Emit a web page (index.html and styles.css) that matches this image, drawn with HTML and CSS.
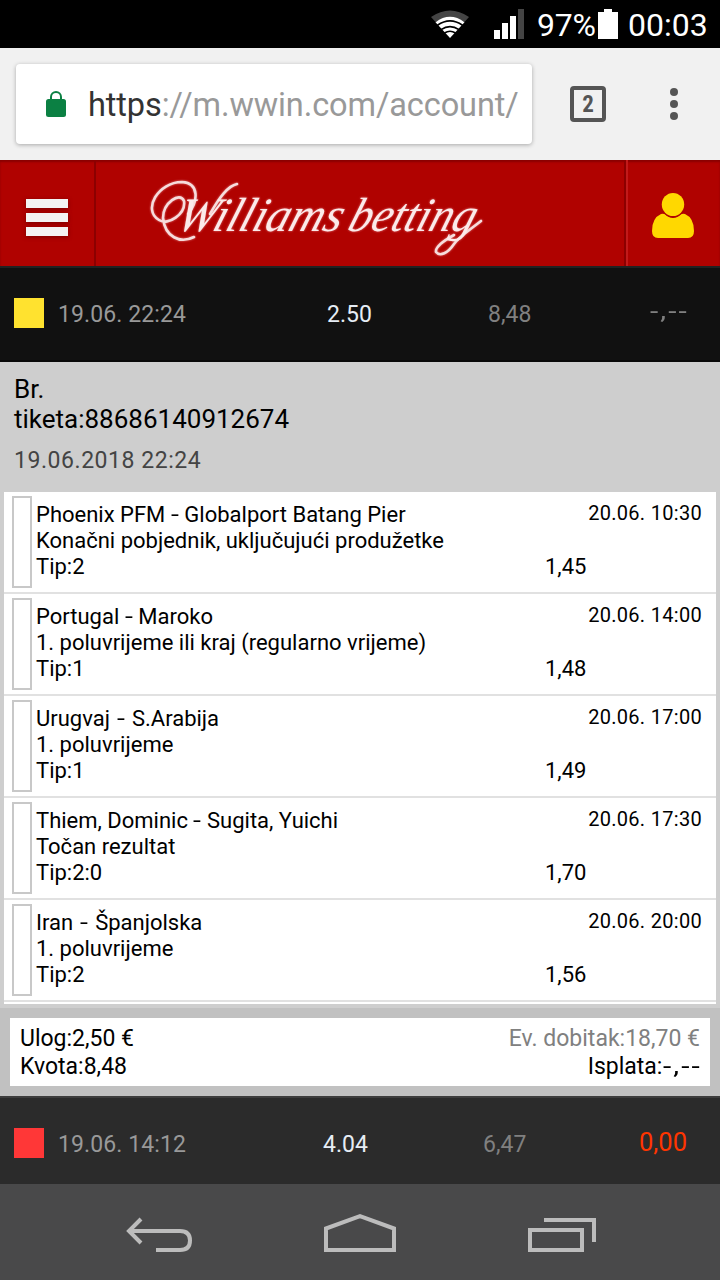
FILE: index.html
```html
<!DOCTYPE html>
<html lang="bs">
<head>
    <title>Williams betting</title>
    <meta charset="utf-8">
    <meta name="viewport" content="width=device-width, initial-scale=1">
    <link rel="stylesheet" href="styles.css">
</head>
<body>
<div class="status-bar">
    <svg class="wifi" width="38" height="29" viewBox="0 0 38 29">
        <path d="M0 7 Q19 -6 38 7 L33.500 12 Q19 2.500 4.500 12 Z" fill="#444"/>
        <path d="M4.500 12.200 Q19 1.500 33.500 12.200 L19 28 Z" fill="#fff"/>
        <path d="M6.500 15.200 Q19 6.500 31.500 15.200 M10 19.600 Q19 13.500 28 19.600 M13.500 23 Q19 19.500 24.500 23" fill="none" stroke="#000" stroke-width="1.700"/>
    </svg>
    <svg class="signal" width="30" height="30" viewBox="0 0 30 30">
        <path d="M0 21h6v9H0zM8 14h6v16H8zM16 7h6v23h-6z" fill="#fff"/>
        <path d="M24 0h6v30h-6z" fill="#444"/>
    </svg>
    <span class="percent">97%</span>
    <svg class="battery" width="20" height="30" viewBox="0 0 20 30">
        <path d="M6 0h8v3h6v27H0V3h6z" fill="#fff"/>
    </svg>
    <span class="clock">00:03</span>
</div>

<div class="browser-bar">
    <div class="url-box">
        <svg width="20" height="26" viewBox="0 0 20 26">
            <path d="M5 9V6a5 5 0 0 1 10 0v3" fill="none" stroke="#0b8043" stroke-width="2"/>
            <rect y="8" width="20" height="18" rx="2.500" fill="#0b8043"/>
        </svg>
        <div class="url"><span class="scheme">https</span>://m.wwin.com/account/</div>
    </div>
    <div class="tabs">2</div>
    <svg class="dots" width="8" height="32" viewBox="0 0 8 32">
        <g fill="#555"><circle cx="4" cy="4" r="4"/><circle cx="4" cy="16" r="4"/><circle cx="4" cy="28" r="4"/></g>
    </svg>
</div>

<div class="header">
    <div class="menu-button">
        <span></span><span></span><span></span>
    </div>
    <div class="logo">
        <svg width="350" height="100" viewBox="0 0 350 100">
            <!-- flourishes around the W and under the g -->
            <path d="M44 77 C30 84 15 77 13 58 C13 43 30 31 34 41 C36 54 18 66 9 60 C-8 50 8 22 32 22 C50 23 48 42 38 54 M60 54 C70 36 78 26 87 24 M331 61 C317 72 309 77 304 84 C298 93 290 97 286 92 C285 87 295 80 304 75"/>
            <text transform="translate(24 71) skewX(-18)" textLength="165" lengthAdjust="spacingAndGlyphs">Williams</text>
            <text transform="translate(196 71) skewX(-18)" textLength="126" lengthAdjust="spacingAndGlyphs">betting</text>
        </svg>
    </div>
    <div class="user-button">
        <svg width="42" height="46" viewBox="0 0 42 46">
            <path d="M9 21 Q13 20 15 23 Q21 27 27 23 Q29 20 33 21 Q42 25 42 38 Q42 45 36 45 H6 Q0 45 0 38 Q0 25 9 21Z" fill="#ffd800"/>
            <circle cx="21" cy="12" r="12.500" fill="#b00200"/>
            <ellipse cx="21" cy="11.500" rx="11.200" ry="11.500" fill="#ffd800"/>
        </svg>
    </div>
</div>

<div class="ticket-row open">
    <span class="status pending"></span>
    <span class="date">19.06. 22:24</span>
    <span class="stake">2.50</span>
    <span class="odds">8,48</span>
    <span class="payout"><span class="no-value">-,--</span></span>
</div>

<div class="ticket">
    <div class="ticket-head">
        <div class="number">Br.<br>tiketa:88686140912674</div>
        <div class="time">19.06.2018 22:24</div>
    </div>
    <div class="matches">
        <div class="match">
            <span class="mark"></span>
            <div class="bet">Phoenix PFM <span class="dash">-</span> Globalport Batang Pier<br>Konačni pobjednik, uključujući produžetke<br>Tip:2</div>
            <div class="match-odds">1,45</div>
            <div class="match-time">20.06. 10:30</div>
        </div>
        <div class="match">
            <span class="mark"></span>
            <div class="bet">Portugal <span class="dash">-</span> Maroko<br>1. poluvrijeme ili kraj (regularno vrijeme)<br>Tip:1</div>
            <div class="match-odds">1,48</div>
            <div class="match-time">20.06. 14:00</div>
        </div>
        <div class="match">
            <span class="mark"></span>
            <div class="bet">Urugvaj <span class="dash wide">-</span> S.Arabija<br>1. poluvrijeme<br>Tip:1</div>
            <div class="match-odds">1,49</div>
            <div class="match-time">20.06. 17:00</div>
        </div>
        <div class="match">
            <span class="mark"></span>
            <div class="bet">Thiem, Dominic <span class="dash">-</span> Sugita, Yuichi<br>Točan rezultat<br>Tip:2:0</div>
            <div class="match-odds">1,70</div>
            <div class="match-time">20.06. 17:30</div>
        </div>
        <div class="match">
            <span class="mark"></span>
            <div class="bet">Iran <span class="dash wide">-</span> Španjolska<br>1. poluvrijeme<br>Tip:2</div>
            <div class="match-odds">1,56</div>
            <div class="match-time">20.06. 20:00</div>
        </div>
    </div>
</div>

<div class="summary">
    <div class="summary-box">
        <div>Ulog:2,50 €<br>Kvota:8,48</div>
        <div class="right"><span class="expected">Ev. dobitak:18,70 €</span><br>Isplata:<span class="no-value">-,--</span></div>
    </div>
</div>

<div class="ticket-row closed">
    <span class="status lost"></span>
    <span class="date">19.06. 14:12</span>
    <span class="stake">4.04</span>
    <span class="odds">6,47</span>
    <span class="payout">0,00</span>
</div>

<div class="nav-bar">
    <svg width="68" height="36" viewBox="0 0 68 36">
        <path d="M15 3 L3 15 L15 27 M3 15 H54 Q64 15 64 24.500 T54 34 H30"/>
    </svg>
    <svg width="72" height="38" viewBox="0 0 72 38">
        <path d="M2 36V14.500L36 2.200l34 12.300V36z"/>
    </svg>
    <svg width="68" height="34" viewBox="0 0 68 34">
        <path d="M2 12h52v20H2zM16 2h50v22"/>
    </svg>
</div>
</body>
</html>
```
FILE: styles.css
```css
* {
    box-sizing: border-box;
}

body {
    margin: 0;
    width: 720px;
    height: 1280px;
    overflow: hidden;
    font-family: Roboto, sans-serif;
    color: #000;
}

svg {
    display: block;
    flex: none;
}

/* Phone status bar */
.status-bar {
    display: flex;
    align-items: center;
    justify-content: flex-end;
    height: 48px;
    padding-right: 11px;
    background-color: #000;
    color: #fff;
    font-size: 32px;
    line-height: 48px;
}

.signal {
    margin: 0 13px 0 25px;
}

.percent {
    width: 61px;
    padding-top: 2px;
    letter-spacing: -0.2px;
}

.clock {
    width: 81px;
    margin-left: 10px;
    padding-top: 2px;
}

/* Browser toolbar */
.browser-bar {
    display: flex;
    align-items: center;
    height: 112px;
    padding-left: 16px;
    background-color: #f1f1f1;
}

.url-box {
    display: flex;
    align-items: center;
    width: 516px;
    height: 80px;
    padding: 0 14px 0 30px;
    border-radius: 4px;
    background-color: #fff;
    box-shadow: 0 1px 4px rgba(0, 0, 0, 0.3);
}

.url {
    flex: 1;
    margin-left: 22px;
    padding-top: 1px;
    white-space: nowrap;
    color: #999;
    font-size: 32.5px;
    line-height: 44px;
    letter-spacing: -0.1px;
}

.scheme {
    color: #333;
}

.tabs {
    width: 36px;
    height: 36px;
    margin-left: 38px;
    border: 4px solid #555;
    border-radius: 4px;
    color: #555;
    font-family: "Roboto Condensed", Roboto, sans-serif;
    font-size: 23px;
    font-weight: bold;
    line-height: 29px;
    text-align: center;
}

.dots {
    margin-left: 64px;
}

/* Site header */
.header {
    display: flex;
    height: 106px;
    background-color: #b00200;
    box-shadow: inset 0 2px 2px #890000;
}

.menu-button {
    display: flex;
    flex-direction: column;
    gap: 5px;
    width: 96px;
    padding: 39px 0 0 26px;
    border-right: 2px solid #8c0000;
}

.menu-button span {
    width: 42px;
    height: 9px;
    background-color: #f3f3f3;
    box-shadow: 0 1px 4px #700;
}

.logo {
    width: 530px;
    padding-left: 54px;
    border-right: 2px solid #8c0000;
}

.logo svg {
    filter: drop-shadow(0 0 1px rgba(255, 200, 200, 0.6));
}

.logo path {
    fill: none;
    stroke: #f6dcdc;
    stroke-width: 2.6;
    stroke-linecap: round;
}

.logo text {
    fill: #fbeaea;
    font-family: "Liberation Serif", serif;
    font-size: 48px;
    font-style: italic;
}

.user-button {
    flex: 1;
    padding: 33px 0 0 24px;
    border-left: 2px solid #c21a1a;
}

/* Ticket rows */
.ticket-row {
    display: flex;
    align-items: center;
    padding: 0 33px 0 14px;
    border-top: 2px solid #222;
    background-color: #111;
    color: #808080;
    font-size: 23px;
}

.open {
    height: 96px;
    border-bottom: 2px solid #080808;
}

.closed {
    height: 88px;
    padding-top: 6px;
    border-top-color: #3d3d3d;
    background-color: #2b2b2b;
}

.status {
    width: 30px;
    height: 30px;
    margin-bottom: 2px;
}

.pending {
    background-color: #ffe22f;
}

.lost {
    background-color: #ff3737;
}

.date {
    width: 269px;
    margin-left: 14px;
    color: #999;
    letter-spacing: 0.1px;
}

.stake {
    width: 161px;
    color: #e6edf5;
}

.closed .date {
    width: 265px;
}

.closed .stake {
    width: 160px;
}

.payout {
    margin-left: auto;
    padding-bottom: 5px;
}

.closed .payout {
    color: #ff3500;
    font-size: 25.5px;
}

.no-value {
    display: inline-block;
    letter-spacing: 1.5px;
    margin: 0 -2px 0 10px;
    transform: scaleX(1.3);
    transform-origin: right;
}

/* Ticket details */
.ticket {
    height: 646px;
    padding: 0 4px 4px;
    background-color: #cecece;
}

.ticket-head {
    height: 130px;
    padding: 12px 10px 0;
}

.number {
    font-size: 26px;
    line-height: 30px;
}

.time {
    margin-top: 12px;
    color: #444;
    font-size: 23px;
    line-height: 30px;
    letter-spacing: 0.55px;
}

.matches {
    height: 512px;
    background-color: #fff;
}

.match {
    display: flex;
    height: 102px;
    padding: 4px 14px 4px 8px;
    border-bottom: 2px solid #e1e1e1;
    font-size: 22px;
    line-height: 26px;
}

.mark {
    width: 20px;
    height: 92px;
    border: 2px solid #c8c8c8;
}

.bet {
    width: 513px;
    padding: 6px 0 0 4px;
    white-space: nowrap;
}

.dash {
    display: inline-block;
    margin: 0 1px;
    transform: scaleX(1.3);
}

.wide {
    margin: 0 2.5px;
}

.match-odds {
    padding-top: 58px;
}

.match-time {
    flex: 1;
    padding-top: 4px;
    font-size: 20px;
    letter-spacing: 0.3px;
    text-align: right;
    white-space: nowrap;
}

/* Stake and payout summary */
.summary {
    height: 88px;
    padding: 10px;
    background-color: #c1c1c1;
}

.summary-box {
    display: flex;
    justify-content: space-between;
    height: 68px;
    padding: 7px 10px 5px;
    background-color: #fff;
    font-size: 23px;
    line-height: 28px;
}

.right {
    text-align: right;
}

.expected {
    color: #808080;
}

/* Phone navigation buttons */
.nav-bar {
    display: flex;
    align-items: flex-end;
    height: 96px;
    padding: 0 0 28px 126px;
    background-color: #49494a;
}

.nav-bar svg {
    margin-right: 130px;
    fill: none;
    stroke: #bcbcbc;
    stroke-width: 4;
}

.nav-bar svg + svg {
    margin-right: 132px;
}
```
